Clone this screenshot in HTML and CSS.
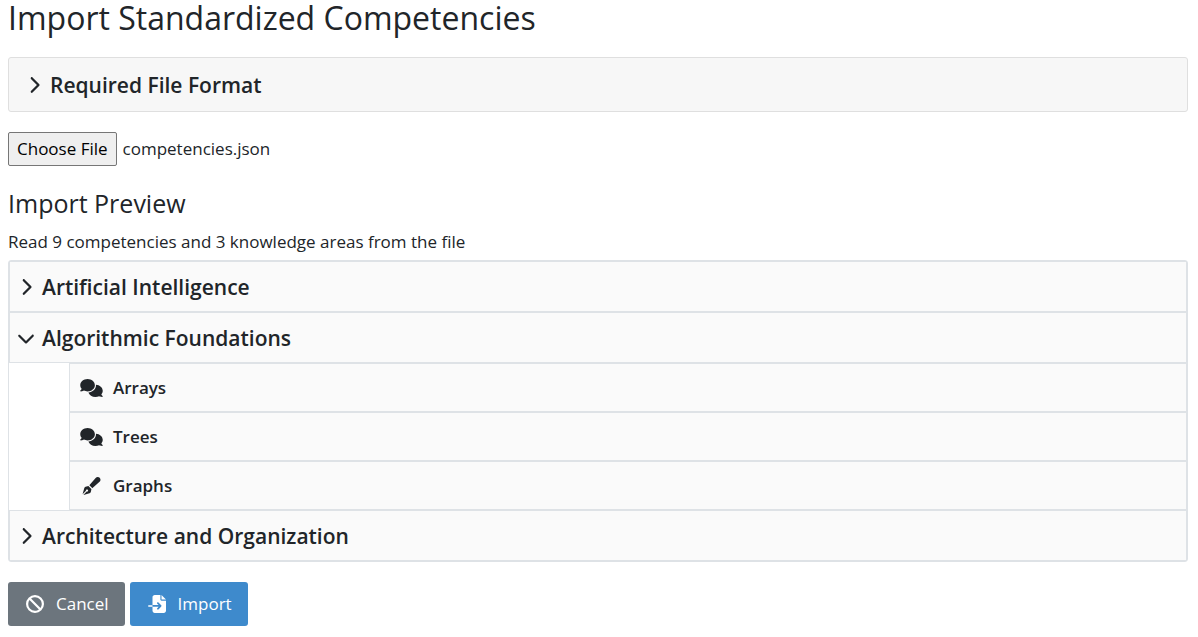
FILE: index.html
```html
<!DOCTYPE html>
<html lang="en">
<head>
<meta charset="utf-8">
<meta name="viewport" content="width=device-width, initial-scale=1">
<title>Import Standardized Competencies</title>
<link rel="stylesheet" href="styles.css">
</head>
<body>
<svg class="sprite" aria-hidden="true">
  <symbol id="chevron-right" viewBox="0 0 320 512"><path d="M310.6 233.4c12.5 12.5 12.5 32.8 0 45.3l-192 192c-12.5 12.5-32.8 12.5-45.3 0s-12.5-32.8 0-45.3L242.7 256 73.4 86.6c-12.5-12.5-12.5-32.8 0-45.3s32.8-12.5 45.3 0l192 192z"/></symbol>
  <symbol id="chevron-down" viewBox="0 0 512 512"><path d="M233.4 406.6c12.5 12.5 32.8 12.5 45.3 0l192-192c12.5-12.5 12.5-32.8 0-45.3s-32.8-12.5-45.3 0L256 338.7 86.6 169.4c-12.5-12.5-32.8-12.5-45.3 0s-12.5 32.8 0 45.3l192 192z"/></symbol>
  <symbol id="comments" viewBox="0 0 640 512"><path d="M208 352c114.9 0 208-78.8 208-176S322.9 0 208 0S0 78.8 0 176c0 38.6 14.7 74.3 39.6 103.4c-3.5 9.4-8.7 17.7-14.2 24.7c-4.8 6.2-9.7 11-13.3 14.3c-1.8 1.6-3.3 2.9-4.3 3.7c-.5 .4-.9 .7-1.1 .8l-.2 .2C1 327.2-1.4 334.4 .8 340.9S9.1 352 16 352c21.8 0 43.8-5.6 62.1-12.5c9.2-3.5 17.8-7.4 25.2-11.4C134.1 343.3 169.8 352 208 352zM448 176c0 112.3-99.1 196.9-216.5 207C255.8 457.4 336.4 512 432 512c38.2 0 73.9-8.7 104.7-23.9c7.5 4 16 7.9 25.2 11.4c18.3 6.9 40.3 12.5 62.1 12.5c6.9 0 13.1-4.5 15.2-11.1c2.1-6.6-.2-13.8-5.8-17.9l-.2-.2c-.2-.2-.6-.4-1.1-.8c-1-.8-2.5-2-4.3-3.7c-3.6-3.3-8.5-8.1-13.3-14.3c-5.5-7-10.7-15.4-14.2-24.7c24.9-29 39.6-64.7 39.6-103.4c0-92.8-84.9-168.9-192.6-175.5c.4 5.1 .6 10.3 .6 15.5z"/></symbol>
  <symbol id="pen" viewBox="0 0 512 512"><path d="M373.5 27.1C388.5 9.9 410.2 0 433 0c43.6 0 79 35.4 79 79c0 22.8-9.9 44.6-27.1 59.6L277.7 319l-10.3-10.3-64-64L193 234.3 373.5 27.1zM170.3 256.9l10.4 10.4 64 64 10.4 10.4-19.2 83.4c-3.9 17.1-16.9 30.7-33.8 35.4L24.4 510.3l95.4-95.4c2.6 .7 5.4 1.1 8.3 1.1c17.7 0 32-14.3 32-32s-14.3-32-32-32s-32 14.3-32 32c0 2.9 .4 5.6 1.1 8.3L1.7 487.6 51.5 310c4.7-16.9 18.3-29.9 35.4-33.8l83.4-19.2z"/></symbol>
  <symbol id="ban" viewBox="0 0 512 512"><path d="M367.2 412.5L99.5 144.8C77.1 176.1 64 214.5 64 256c0 106 86 192 192 192c41.5 0 79.9-13.1 111.2-35.5zm45.3-45.3C434.9 335.9 448 297.5 448 256c0-106-86-192-192-192c-41.5 0-79.9 13.1-111.2 35.5L412.5 367.2zM0 256a256 256 0 1 1 512 0A256 256 0 1 1 0 256z"/></symbol>
  <symbol id="file-import" viewBox="0 0 512 512"><path d="M128 64c0-35.3 28.7-64 64-64H352V128c0 17.7 14.3 32 32 32H512V448c0 35.3-28.7 64-64 64H192c-35.3 0-64-28.7-64-64V336H302.1l-39 39c-9.4 9.4-9.4 24.6 0 33.9s24.6 9.4 33.9 0l80-80c9.4-9.4 9.4-24.6 0-33.9l-80-80c-9.4-9.4-24.6-9.4-33.9 0s-9.4 24.6 0 33.9l39 39H128V64zm0 224v48H24c-13.3 0-24-10.7-24-24s10.7-24 24-24H128zM512 128H384V0L512 128z"/></symbol>
</svg>
<main class="page">
  <h1 class="title">Import Standardized Competencies</h1>

  <button type="button" class="format-card" aria-expanded="false">
    <svg class="chevron"><use href="#chevron-right"/></svg>Required File Format
  </button>

  <div class="file-field">
    <input class="file-input" type="file" id="file" accept=".json">
    <label class="file-button" for="file">Choose File</label>
    <span>competencies.json</span>
  </div>

  <h2 class="subtitle">Import Preview</h2>
  <p class="summary">Read 9 competencies and 3 knowledge areas from the file</p>

  <div class="tree">
    <button type="button" class="area" aria-expanded="false">
      <svg class="chevron"><use href="#chevron-right"/></svg>Artificial Intelligence
    </button>
    <button type="button" class="area" aria-expanded="true">
      <svg class="chevron"><use href="#chevron-down"/></svg>Algorithmic Foundations
    </button>
    <ul class="competencies">
      <li class="competency"><svg class="kind"><use href="#comments"/></svg>Arrays</li>
      <li class="competency"><svg class="kind"><use href="#comments"/></svg>Trees</li>
      <li class="competency"><svg class="kind"><use href="#pen"/></svg>Graphs</li>
    </ul>
    <button type="button" class="area" aria-expanded="false">
      <svg class="chevron"><use href="#chevron-right"/></svg>Architecture and Organization
    </button>
  </div>

  <div class="actions">
    <button type="button" class="btn btn-cancel"><svg class="btn-icon"><use href="#ban"/></svg>Cancel</button>
    <button type="button" class="btn btn-import"><svg class="btn-icon"><use href="#file-import"/></svg>Import</button>
  </div>
</main>
</body>
</html>
```
FILE: styles.css
```css
*, *::before, *::after {
  box-sizing: border-box;
}

body {
  margin: 0;
  background: #fff;
  color: #212529;
  font-family: "Segoe UI", "Open Sans", "Noto Sans", sans-serif;
  font-size: 17px;
  line-height: 26px;
}

button {
  font: inherit;
  color: inherit;
  cursor: pointer;
}

svg {
  fill: currentColor;
  flex: none;
}

.sprite {
  display: none;
}

.page {
  padding: 0 10px 10px 8px;
}

.title {
  margin: 0 0 21px;
  font-size: 32px;
  font-weight: 400;
  line-height: 36px;
}

.format-card,
.area {
  display: flex;
  align-items: center;
  width: 100%;
  font-size: 21px;
  font-weight: 600;
  text-align: left;
}

.format-card {
  gap: 7px;
  height: 55px;
  padding: 0 16px;
  background: #f7f7f7;
  border: 1px solid #dfdfdf;
  border-radius: 3px;
}

.chevron {
  width: 18px;
  height: 18px;
}

.file-field {
  display: flex;
  align-items: center;
  gap: 6px;
  margin: 20px 0 24px;
}

.file-input {
  position: absolute;
  width: 1px;
  height: 1px;
  opacity: 0;
}

.file-button {
  padding: 3px 8px;
  background: #efefef;
  border: 1px solid #767676;
  border-radius: 2px;
  color: #000;
  cursor: pointer;
}

.subtitle {
  margin: 0 0 13px;
  font-size: 25px;
  font-weight: 400;
  line-height: 26px;
}

.summary {
  margin: 0 0 5px;
}

.tree {
  border: 1px solid #dee2e6;
  border-radius: 3px;
}

.area {
  gap: 7px;
  height: 51px;
  padding: 0 7px;
  background: #fafafa;
  border: 1px solid #dee2e6;
  border-radius: 0;
}

.competencies {
  margin: 0;
  padding: 0 0 0 60px;
  list-style: none;
}

.competency {
  display: flex;
  align-items: center;
  gap: 10px;
  height: 49px;
  padding: 0 10px;
  background: #fafafa;
  border: 1px solid #dee2e6;
  font-weight: 600;
}

.kind {
  width: 23px;
  height: 18px;
}

.actions {
  display: flex;
  gap: 5px;
  margin-top: 20px;
}

.btn {
  display: flex;
  align-items: center;
  gap: 12px;
  height: 44px;
  padding: 0 16px 0 18px;
  border: 0;
  border-radius: 3px;
  color: #fff;
}

.btn-cancel {
  background: #6c757d;
}

.btn-import {
  background: #3e8acc;
}

.btn-icon {
  width: 18px;
  height: 18px;
}
```
